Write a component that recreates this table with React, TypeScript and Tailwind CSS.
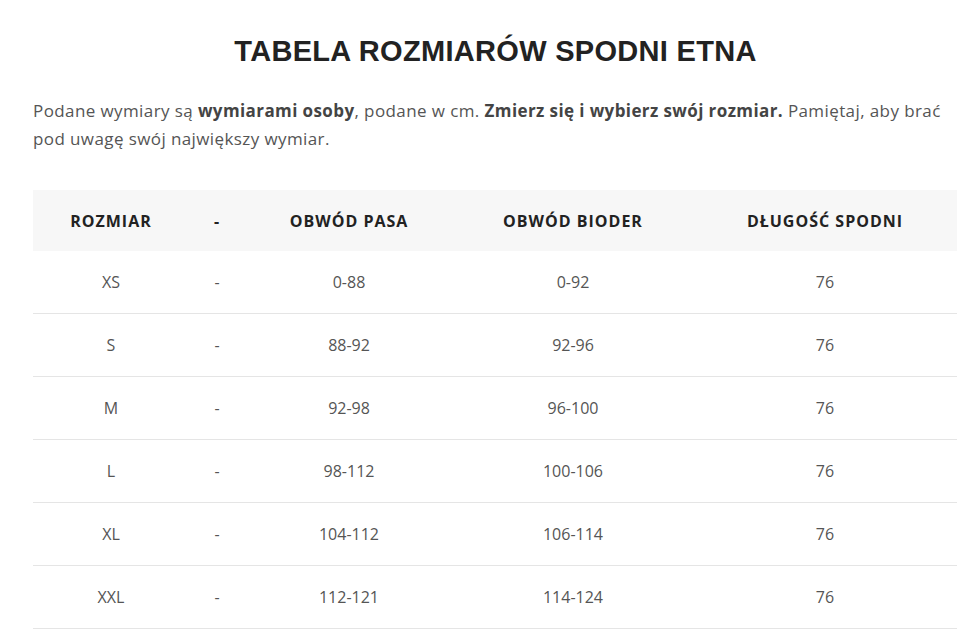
import React from 'react';

type Row = {
  size: string;
  waist: string;
  hips: string;
  length: string;
};

const rows: Row[] = [
  { size: 'XS', waist: '0-88', hips: '0-92', length: '76' },
  { size: 'S', waist: '88-92', hips: '92-96', length: '76' },
  { size: 'M', waist: '92-98', hips: '96-100', length: '76' },
  { size: 'L', waist: '98-112', hips: '100-106', length: '76' },
  { size: 'XL', waist: '104-112', hips: '106-114', length: '76' },
  { size: 'XXL', waist: '112-121', hips: '114-124', length: '76' },
];

const cols = 'grid grid-cols-[156px_56px_208px_240px_264px]';

export default function App() {
  return (
    <div
      className="min-h-[642px] bg-white pt-[33px]"
      style={{ fontFamily: '"Open Sans", "Liberation Sans", sans-serif' }}
    >
      <h1
        className="pl-[11px] text-center text-[29px] font-bold leading-9 tracking-[0.3px] text-[#222]"
        style={{ fontFamily: '"Liberation Sans", Arial, sans-serif' }}
      >
        TABELA ROZMIARÓW SPODNI ETNA
      </h1>

      <p className="mx-[33px] mt-[28px] text-[17px] leading-[28px] tracking-[0.4px] text-[#555]">
        Podane wymiary są <b className="font-bold text-[#444]">wymiarami osoby</b>, podane w cm.{' '}
        <b className="font-bold text-[#444]">Zmierz się i wybierz swój rozmiar.</b> Pamiętaj, aby brać
        pod uwagę swój największy wymiar.
      </p>

      {/* tabela */}
      <div className="ml-[33px] mt-[37px] w-[924px]">
        <div className={`${cols} h-[61px] items-center bg-[#f7f7f7] text-center text-[16px] font-bold tracking-[1px] text-[#222]`}>
          <div>ROZMIAR</div>
          <div>-</div>
          <div>OBWÓD PASA</div>
          <div>OBWÓD BIODER</div>
          <div>DŁUGOŚĆ SPODNI</div>
        </div>
        {rows.map((r) => (
          <div
            key={r.size}
            className={`${cols} h-[63px] items-center border-b border-[#e5e5e5] text-center text-[16px] text-[#555]`}
          >
            <div>{r.size}</div>
            <div>-</div>
            <div>{r.waist}</div>
            <div>{r.hips}</div>
            <div>{r.length}</div>
          </div>
        ))}
      </div>
    </div>
  );
}
